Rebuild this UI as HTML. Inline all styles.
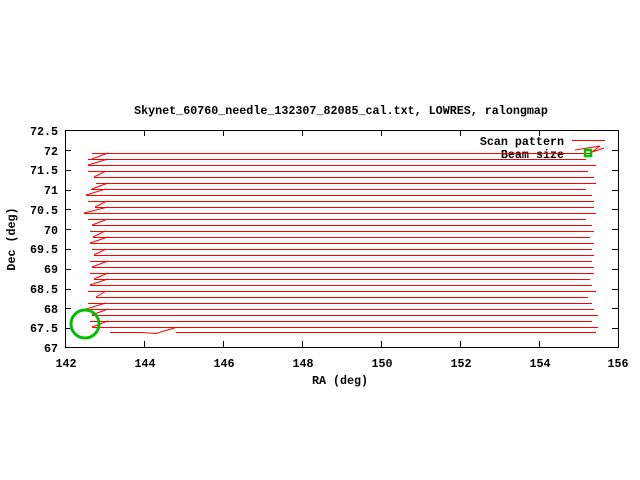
<!DOCTYPE html>
<html><head><meta charset="utf-8"><style>
html,body{margin:0;padding:0;background:#fff;width:640px;height:480px;overflow:hidden}
svg text{font-family:"Liberation Mono",monospace;font-weight:bold;font-size:11.7px;fill:#000}
</style></head><body>
<svg width="640" height="480" viewBox="0 0 640 480" xmlns="http://www.w3.org/2000/svg">
<text x="341" y="114" text-anchor="middle">Skynet_60760_needle_132307_82085_cal.txt, LOWRES, ralongmap</text>
<g stroke="#000" stroke-width="1" fill="none" shape-rendering="crispEdges">
<rect x="65.5" y="130.5" width="553" height="217"/>
<path d="M65 150.5h6M618 150.5h-6M65 170.5h6M618 170.5h-6M65 190.5h6M618 190.5h-6M65 209.5h6M618 209.5h-6M65 229.5h6M618 229.5h-6M65 249.5h6M618 249.5h-6M65 269.5h6M618 269.5h-6M65 289.5h6M618 289.5h-6M65 308.5h6M618 308.5h-6M65 328.5h6M618 328.5h-6"/>
<path d="M144.5 347v-6M144.5 130v6M223.5 347v-6M223.5 130v6M302.5 347v-6M302.5 130v6M381.5 347v-6M381.5 130v6M460.5 347v-6M460.5 130v6M539.5 347v-6M539.5 130v6"/>
</g>
<g text-anchor="end">
<text x="58" y="135">72.5</text><text x="58" y="155">72</text><text x="58" y="174">71.5</text><text x="58" y="194">71</text><text x="58" y="214">70.5</text><text x="58" y="234">70</text><text x="58" y="253">69.5</text><text x="58" y="273">69</text><text x="58" y="293">68.5</text><text x="58" y="313">68</text><text x="58" y="332">67.5</text><text x="58" y="352">67</text>
</g>
<g text-anchor="middle">
<text x="66" y="367">142</text><text x="145" y="367">144</text><text x="224" y="367">146</text><text x="303" y="367">148</text><text x="382" y="367">150</text><text x="461" y="367">152</text><text x="540" y="367">154</text><text x="618" y="367">156</text>
<text x="340" y="384">RA (deg)</text>
</g>
<text transform="translate(15,239) rotate(-90)" text-anchor="middle">Dec (deg)</text>
<text x="564" y="145" text-anchor="end">Scan pattern</text>
<text x="564" y="158" text-anchor="end">Beam size</text>
<g fill="#ff0000">
<rect x="572" y="140" width="33" height="1"/>
<rect x="92" y="153" width="500" height="1"/>
<rect x="88" y="159" width="498" height="1"/>
<rect x="88" y="165" width="508" height="1"/>
<rect x="88" y="171" width="500" height="1"/>
<rect x="94" y="177" width="500" height="1"/>
<rect x="96" y="183" width="500" height="1"/>
<rect x="91" y="189" width="495" height="1"/>
<rect x="86" y="195" width="506" height="1"/>
<rect x="88" y="201" width="506" height="1"/>
<rect x="95" y="207" width="499" height="1"/>
<rect x="84" y="213" width="512" height="1"/>
<rect x="88" y="219" width="498" height="1"/>
<rect x="92" y="225" width="500" height="1"/>
<rect x="90" y="231" width="504" height="1"/>
<rect x="93" y="237" width="497" height="1"/>
<rect x="90" y="243" width="504" height="1"/>
<rect x="92" y="249" width="500" height="1"/>
<rect x="94" y="255" width="500" height="1"/>
<rect x="90" y="261" width="502" height="1"/>
<rect x="92" y="267" width="502" height="1"/>
<rect x="90" y="273" width="504" height="1"/>
<rect x="94" y="279" width="496" height="1"/>
<rect x="90" y="285" width="502" height="1"/>
<rect x="88" y="291" width="508" height="1"/>
<rect x="96" y="297" width="492" height="1"/>
<rect x="88" y="303" width="504" height="1"/>
<rect x="86" y="309" width="508" height="1"/>
<rect x="92" y="315" width="506" height="1"/>
<rect x="90" y="321" width="502" height="1"/>
<rect x="92" y="327" width="506" height="1"/>
<rect x="110" y="332" width="32" height="1"/>
<rect x="176" y="332" width="420" height="1"/>
</g>
<g stroke="#ff0000" stroke-width="1" fill="none">
<path d="M92 159l16-6M88 165l20-6M94 177l12-6M92 189l16-6M86 195l20-6M95 207l12-6M84 213l24-6M92 225l16-6M93 237l12-6M90 243l18-6M94 255l12-6M92 267l16-6M94 279l14-6M90 285l18-6M96 297l10-6M86 309l20-6M92 315l16-6M92 327l16-6M142 332.5l14 1 20-6"/>
<path d="M575 150l25 -4 -8 6 12-4"/>
</g>
<circle cx="85" cy="324" r="14" stroke="#00c000" stroke-width="3" fill="none"/>
<rect x="585" y="150" width="6" height="6" fill="none" stroke="#00c000" stroke-width="2.5"/>
</svg>
</body></html>
